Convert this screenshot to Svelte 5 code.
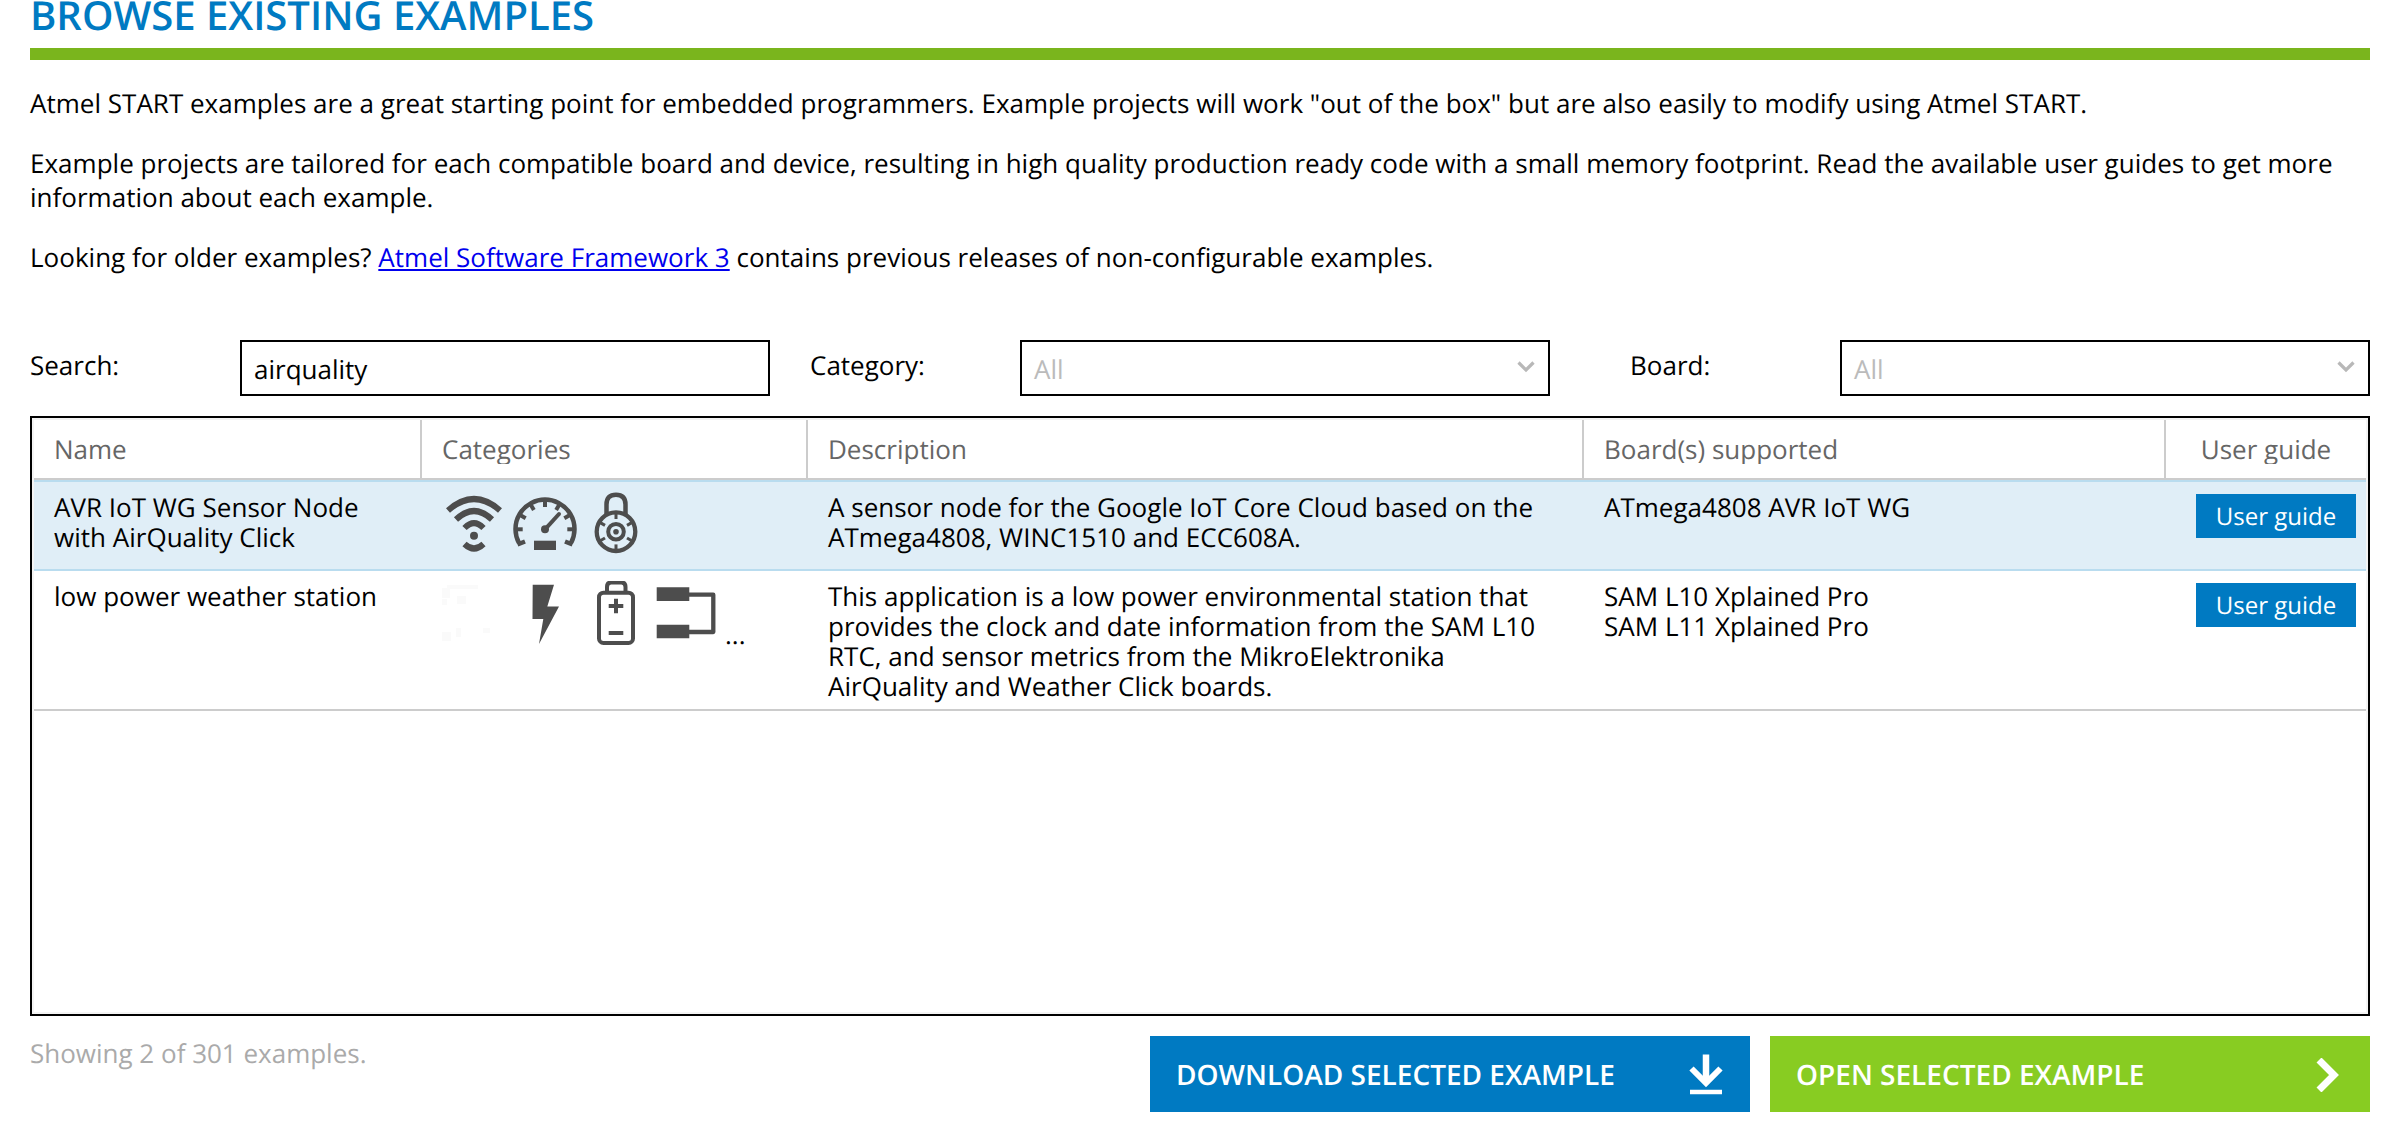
<script>
  const rows = [
    {
      name: ['AVR IoT WG Sensor Node', 'with AirQuality Click'],
      icons: ['wifi', 'gauge', 'lock'],
      more: false,
      description: [
        'A sensor node for the Google IoT Core Cloud based on the',
        'ATmega4808, WINC1510 and ECC608A.'
      ],
      boards: ['ATmega4808 AVR IoT WG'],
      selected: true
    },
    {
      name: ['low power weather station'],
      icons: ['faded', 'bolt', 'battery', 'link'],
      more: true,
      description: [
        'This application is a low power environmental station that',
        'provides the clock and date information from the SAM L10',
        'RTC, and sensor metrics from the MikroElektronika',
        'AirQuality and Weather Click boards.'
      ],
      boards: ['SAM L10 Xplained Pro', 'SAM L11 Xplained Pro'],
      selected: false
    }
  ];
  const columns = ['Name', 'Categories', 'Description', 'Board(s) supported', 'User guide'];
  const ticks = [-90, -60, -30, 0, 30, 60, 90];
  const dialTicks = [0, 60, 120, 180, 240, 300];
</script>

{#snippet icon(kind)}
  <svg class="icon" viewBox="0 0 64 64" fill="none" stroke="#4d4d4d">
    {#if kind === 'wifi'}
      <path d="M6 18.500Q32 -4.500 58 18.500" stroke-width="6" />
      <path d="M14 27.500Q32 10.500 50 27.500" stroke-width="6" />
      <path d="M22.500 36Q32 26.500 41.500 36" stroke-width="6" />
      <circle cx="32" cy="43.700" r="4" fill="#4d4d4d" stroke="none" />
      <path d="M22.500 52Q32 61 41.500 52" stroke-width="6" />
    {:else if kind === 'gauge'}
      <path d="M6 51A29.500 29.500 0 1 1 58 51" stroke-width="4.500" />
      <path d="M4.500 52.500L12 49.500M59.500 52.500L52 49.500" stroke-width="4.500" />
      {#each ticks as angle}
        <path d="M32 8V15" stroke-width="4" transform="rotate({angle} 32 37.300)" />
      {/each}
      <path d="M32 37.300L46 22" stroke-width="4" stroke-linecap="round" />
      <circle cx="32" cy="37.300" r="4" fill="#4d4d4d" stroke="none" />
      <rect x="21" y="48.700" width="22" height="9.300" fill="#4d4d4d" stroke="none" />
    {:else if kind === 'lock'}
      <path d="M22.500 22V12.500Q22.500 2.700 32 2.700T41.500 12.500V22" stroke-width="4.500" />
      <circle cx="32" cy="39.700" r="19.300" stroke-width="4.300" />
      {#each dialTicks as angle}
        <path d="M32 21V27" stroke-width="3" transform="rotate({angle} 32 39.700)" />
      {/each}
      <circle cx="32" cy="39.700" r="7.800" stroke-width="4" />
      <circle cx="32" cy="39.700" r="2.800" fill="#4d4d4d" stroke="none" />
    {:else if kind === 'faded'}
      <path d="M5 4H36V8H5ZM0 7H8V17H0ZM0 18H5V24H0ZM15 15H24V23H15ZM0 51H9V60H0ZM14 47H19V56H14ZM41 47H48V52H41Z" fill="#fafafa" stroke="none" />
    {:else if kind === 'bolt'}
      <path d="M19.700 3.700H41L34.300 25.500H46L26 63L30.300 38H19.500Z" fill="#4d4d4d" stroke="none" />
    {:else if kind === 'battery'}
      <path d="M23 11V6Q23 1.500 27 1.500H37.500Q41.500 1.500 41.500 6V11" stroke-width="4" />
      <rect x="15" y="11.700" width="34" height="50.300" rx="4.500" stroke-width="4" />
      <path d="M24.700 25H39.300M32 17.700V32.300M24.700 52H39.300" stroke-width="4" />
    {:else}
      <path d="M1.700 6.300H34.300V20H1.700ZM1.700 43.700H34.300V57.300H1.700Z" fill="#4d4d4d" stroke="none" />
      <path d="M34 13.700H58.300V51H34" stroke-width="4.300" stroke-linejoin="round" />
    {/if}
  </svg>
{/snippet}

{#snippet chevron()}
  <svg class="chevron" viewBox="0 0 20 14"><path d="M2.500 2.500L10 10L17.500 2.500" fill="none" stroke="#b8b8b8" stroke-width="3.200" /></svg>
{/snippet}

<main>
  <h1>BROWSE EXISTING EXAMPLES</h1>
  <section class="intro">
    <p>Atmel START examples are a great starting point for embedded programmers. Example projects will work "out of the box" but are also easily to modify using Atmel START.</p>
    <p>Example projects are tailored for each compatible board and device, resulting in high quality production ready code with a small memory footprint. Read the available user guides to get more<br />information about each example.</p>
    <p>Looking for older examples? <a href="#asf">Atmel Software Framework 3</a> contains previous releases of non-configurable examples.</p>
  </section>

  <section class="filters">
    <div class="filter"><span>Search:</span><div class="field">airquality</div></div>
    <div class="filter"><span>Category:</span><div class="field muted">All{@render chevron()}</div></div>
    <div class="filter"><span>Board:</span><div class="field muted">All{@render chevron()}</div></div>
  </section>

  <section class="table">
    <div class="row head">
      {#each columns as column}<div><span class="title">{column}</span></div>{/each}
    </div>
    {#each rows as row}
      <div class="row body" class:selected={row.selected}>
        <div>{#each row.name as line}<span class="line">{line}</span>{/each}</div>
        <div class="icons">
          {#each row.icons as kind}{@render icon(kind)}{/each}
          {#if row.more}<span class="more">...</span>{/if}
        </div>
        <div>{#each row.description as line}<span class="line">{line}</span>{/each}</div>
        <div>{#each row.boards as line}<span class="line">{line}</span>{/each}</div>
        <div class="action"><button class="guide">User guide</button></div>
      </div>
    {/each}
  </section>

  <footer>
    <span class="count">Showing 2 of 301 examples.</span>
    <button class="cta blue">
      DOWNLOAD SELECTED EXAMPLE
      <svg class="arrow" viewBox="0 0 34 42" fill="none" stroke="#fff">
        <path d="M17 .5V28" stroke-width="6.500" />
        <path d="M2.500 14.500L17 29L31.500 14.500" stroke-width="6" />
        <path d="M1 38H33" stroke-width="4.500" />
      </svg>
    </button>
    <button class="cta green">
      OPEN SELECTED EXAMPLE
      <svg class="next" viewBox="0 0 24 34" fill="none" stroke="#fff"><path d="M3 2L18 17L3 32" stroke-width="7" /></svg>
    </button>
  </footer>
</main>

<style>
  :global(body) { background: #fff; overflow: hidden; }
  main { box-sizing: border-box; width: 2406px; height: 1140px; padding: 0 36px 0 30px; overflow: hidden; font-family: 'Open Sans', sans-serif; font-size: 26px; color: #000; text-rendering: geometricPrecision; }
  h1 { box-sizing: border-box; height: 60px; margin: 0; border-bottom: 12px solid #7ab51d; color: #007ac2; font-size: 40px; font-weight: 600; line-height: 30px; white-space: nowrap; }
  .intro { height: 280px; padding-top: 26px; box-sizing: border-box; line-height: 34px; letter-spacing: .014px; white-space: nowrap; }
  p { margin: 0 0 26px; }
  a { color: #00e; }
  .filters { display: grid; grid-template-columns: 740px 740px 740px; column-gap: 40px; height: 76px; }
  .filter { display: flex; justify-content: space-between; }
  .filter:last-child { margin: 0 -40px 0 40px; }
  .filter span { line-height: 50px; }
  .field { box-sizing: border-box; display: flex; justify-content: space-between; width: 530px; height: 56px; padding: 1px 12px 0; border: 2px solid #000; line-height: 52px; }
  .muted { color: #bbb; }
  .chevron { width: 20px; height: 14px; margin-top: 17px; }
  .table { box-sizing: border-box; height: 600px; border: 2px solid #000; box-shadow: inset 0 0 0 2px #f4f4f4; }
  .row { display: grid; grid-template-columns: 388px 386px 776px 582px 1fr; margin: 0 2px; }
  .head { box-sizing: border-box; height: 62px; border-top: 2px solid #f2f2f2; border-bottom: 2px solid #ccc; color: #666; }
  .head > div { border-right: 2px solid #ccc; padding-left: 20px; }
  .head > div:last-child { border: 0; padding: 0; text-align: center; }
  .title { display: block; height: 35px; padding-top: 9px; line-height: 40px; overflow: hidden; }
  .body { box-sizing: border-box; height: 140px; border-bottom: 2px solid #ccc; line-height: 30px; letter-spacing: .014px; }
  .body > div { padding: 10px 0 0 20px; }
  .selected { height: 91px; border-top: 2px solid #b9dcef; border-bottom-color: #b9dcef; background: #e0eef7; }
  .line { display: block; white-space: nowrap; }
  .body > .icons { display: flex; align-items: flex-start; gap: 7px; }
  .icon { flex: none; width: 64px; height: 64px; }
  .more { line-height: 30px; margin: 38px 0 0 -1px; }
  .body > .action { padding: 12px 0 0 30px; }
  button { border: 0; color: #fff; font-family: inherit; text-rendering: inherit; }
  .guide { display: block; width: 160px; height: 44px; padding: 1px 0 0; background: #007ac2; font-size: 24px; }
  footer { display: flex; gap: 20px; padding-top: 20px; }
  .count { flex: 1; color: #aaa; line-height: 34px; }
  .cta { display: flex; align-items: center; justify-content: space-between; width: 600px; height: 76px; padding: 1px 27px 0 26px; font-size: 28px; font-weight: 600; }
  .blue { background: #007ac2; }
  .green { padding-right: 30px; background: #8c2; }
  .arrow { width: 34px; height: 42px; }
  .next { width: 24px; height: 34px; }
</style>
